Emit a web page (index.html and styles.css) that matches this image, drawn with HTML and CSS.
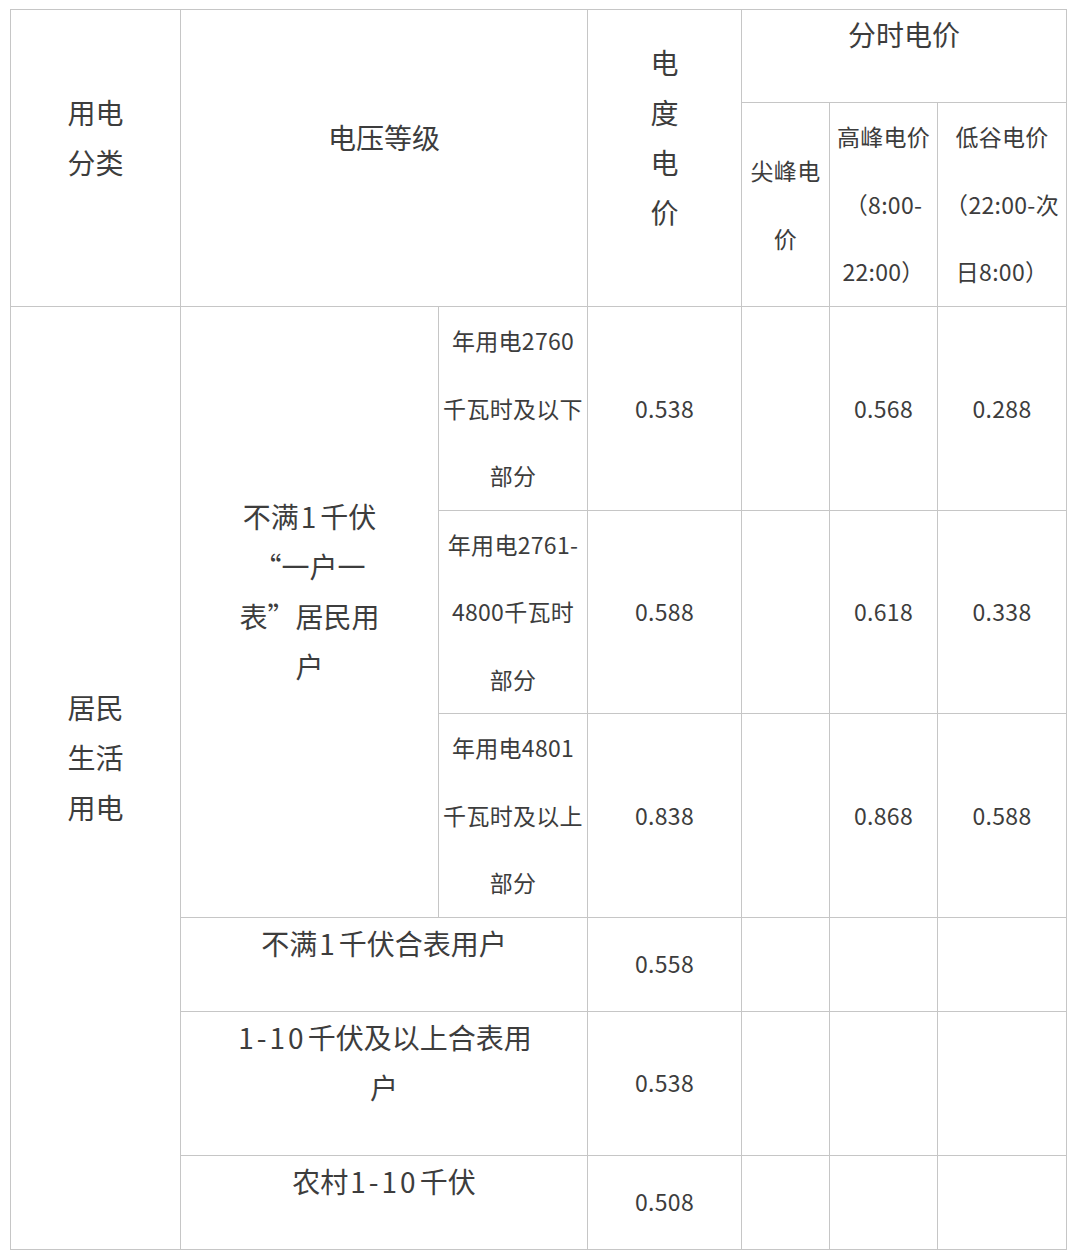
FILE: index.html
```html
<!DOCTYPE html>
<html lang="zh-CN">
<head>
<meta charset="utf-8">
<title>电价表</title>
<link rel="stylesheet" href="styles.css">
</head>
<body>
<table class="price">
  <colgroup>
    <col class="c1"><col class="c2"><col class="c3"><col class="c4"><col class="c5"><col class="c6"><col class="c7">
  </colgroup>
  <tr class="r-head1">
    <td rowspan="2" class="big">用电<br>分类</td>
    <td rowspan="2" colspan="2" class="big">电压等级</td>
    <td rowspan="2" class="big">电<br>度<br>电<br>价</td>
    <td colspan="3" class="big top">分时电价</td>
  </tr>
  <tr class="r-head2">
    <td class="small">尖峰电<br>价</td>
    <td class="small">高峰电价<br>（8:00-<br>22:00）</td>
    <td class="small">低谷电价<br>（22:00-次<br>日8:00）</td>
  </tr>
  <tr class="r-tier">
    <td rowspan="6" class="big">居民<br>生活<br>用电</td>
    <td rowspan="3" class="big">不满<span class="num">1</span>千伏<br>“一户一<br>表”居民用<br>户</td>
    <td class="small">年用电2760<br>千瓦时及以下<br>部分</td>
    <td class="small">0.538</td>
    <td class="small"></td>
    <td class="small">0.568</td>
    <td class="small">0.288</td>
  </tr>
  <tr class="r-tier">
    <td class="small">年用电2761-<br>4800千瓦时<br>部分</td>
    <td class="small">0.588</td>
    <td class="small"></td>
    <td class="small">0.618</td>
    <td class="small">0.338</td>
  </tr>
  <tr class="r-tier">
    <td class="small">年用电4801<br>千瓦时及以上<br>部分</td>
    <td class="small">0.838</td>
    <td class="small"></td>
    <td class="small">0.868</td>
    <td class="small">0.588</td>
  </tr>
  <tr class="r-short">
    <td colspan="2" class="big">不满<span class="num">1</span>千伏合表用户</td>
    <td class="small">0.558</td>
    <td></td><td></td><td></td>
  </tr>
  <tr class="r-tall">
    <td colspan="2" class="big"><span class="num">1-10</span>千伏及以上合表用<br>户</td>
    <td class="small">0.538</td>
    <td></td><td></td><td></td>
  </tr>
  <tr class="r-short">
    <td colspan="2" class="big">农村<span class="num">1-10</span>千伏</td>
    <td class="small">0.508</td>
    <td></td><td></td><td></td>
  </tr>
</table>
</body>
</html>
```

FILE: styles.css
```css
html, body {
  margin: 0;
  background: #ffffff;
}
body {
  padding: 9px 0 0 10px;
  font-family: "Noto Sans CJK SC", "Noto Sans", sans-serif;
  color: #3d3d3d;
}
.price {
  border-collapse: collapse;
  table-layout: fixed;
  width: 1057px;
}
.c1 { width: 170px; }
.c2 { width: 258px; }
.c3 { width: 149px; }
.c4 { width: 154px; }
.c5 { width: 88px; }
.c6 { width: 108px; }
.c7 { width: 129px; }
.price td {
  border: 1px solid #c6c6c6;
  padding: 0;
  text-align: center;
  vertical-align: middle;
  box-sizing: border-box;
}
.big {
  font-size: 28px;
  line-height: 50px;
  padding-bottom: 42px !important;
}
.big.top {
  vertical-align: top;
  padding: 0 !important;
  line-height: 48px;
}
.num {
  letter-spacing: 3px;
  padding: 0 1px 0 2px;
}
.small {
  font-size: 23px;
  line-height: 67.5px;
  letter-spacing: 0.3px;
}
.r-head1 { height: 93px; }
.r-head2 { height: 204px; }
.r-tier { height: 203px; }
.r-short { height: 94px; }
.r-tall { height: 144px; }
```
